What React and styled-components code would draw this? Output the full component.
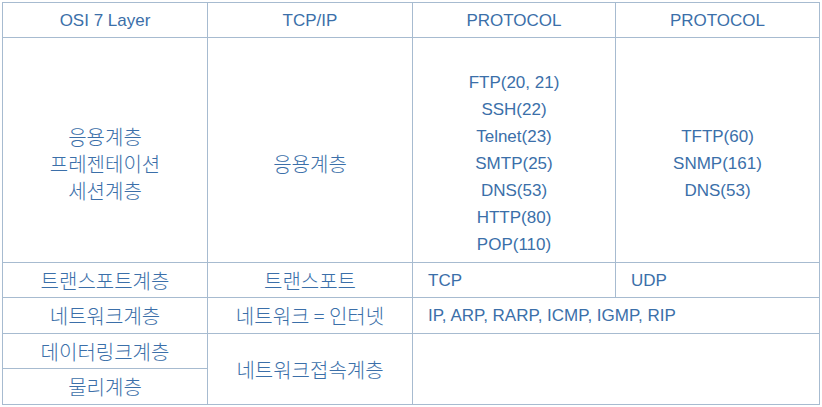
import React from "react";
import styled, { createGlobalStyle } from "styled-components";

const Global = createGlobalStyle`
  html, body { margin: 0; padding: 0; background: #ffffff; }
  body {
    font-family: "Liberation Sans", "Noto Sans CJK KR", Arial, sans-serif;
    color: #3b6fa9;
  }
`;

const Page = styled.div`
  padding: 2px;
`;

const Grid = styled.div`
  display: grid;
  grid-template-columns: 205px 205px 203px 204px;
  grid-template-rows: 35px 225px 35px 36px 35px 36px;
  width: 818px;
  border-left: 1px solid #a7bbd0;
  border-top: 1px solid #a7bbd0;
  box-sizing: border-box;
`;

const Cell = styled.div`
  grid-column: ${(p) => p.$col} / span ${(p) => p.$colSpan || 1};
  grid-row: ${(p) => p.$row} / span ${(p) => p.$rowSpan || 1};
  border-right: 1px solid #a7bbd0;
  border-bottom: 1px solid #a7bbd0;
  box-sizing: border-box;
  display: flex;
  flex-direction: column;
  justify-content: center;
  align-items: ${(p) => (p.$left ? "flex-start" : "center")};
  padding-left: ${(p) => (p.$left ? "15px" : "0")};
  padding-top: ${(p) => (p.$lead ? "27px" : "0")};
  font-size: 17px;
  line-height: 27px;
  text-align: ${(p) => (p.$left ? "left" : "center")};
  white-space: nowrap;
`;

const Line = styled.span`
  display: block;
`;

const Ko = styled.span`
  display: block;
  font-family: "Noto Sans CJK KR", sans-serif;
  font-size: 20px;
  font-weight: 300;
  line-height: 27px;
`;

const Lines = ({ items }) => items.map((t) => <Line key={t}>{t}</Line>);
const KoLines = ({ items }) => items.map((t) => <Ko key={t}>{t}</Ko>);

export default function App() {
  return (
    <>
      <Global />
      <Page>
        <Grid>
          <Cell $col={1} $row={1}>OSI 7 Layer</Cell>
          <Cell $col={2} $row={1}>TCP/IP</Cell>
          <Cell $col={3} $row={1}>PROTOCOL</Cell>
          <Cell $col={4} $row={1}>PROTOCOL</Cell>

          <Cell $col={1} $row={2} $lead>
            <KoLines items={["응용계층", "프레젠테이션", "세션계층"]} />
          </Cell>
          <Cell $col={2} $row={2} $lead>
            <Ko>응용계층</Ko>
          </Cell>
          <Cell $col={3} $row={2} $lead>
            <Lines
              items={[
                "FTP(20, 21)",
                "SSH(22)",
                "Telnet(23)",
                "SMTP(25)",
                "DNS(53)",
                "HTTP(80)",
                "POP(110)",
              ]}
            />
          </Cell>
          <Cell $col={4} $row={2} $lead>
            <Lines items={["TFTP(60)", "SNMP(161)", "DNS(53)"]} />
          </Cell>

          <Cell $col={1} $row={3}><Ko>트랜스포트계층</Ko></Cell>
          <Cell $col={2} $row={3}><Ko>트랜스포트</Ko></Cell>
          <Cell $col={3} $row={3} $left>TCP</Cell>
          <Cell $col={4} $row={3} $left>UDP</Cell>

          <Cell $col={1} $row={4}><Ko>네트워크계층</Ko></Cell>
          <Cell $col={2} $row={4}><Ko>네트워크 = 인터넷</Ko></Cell>
          <Cell $col={3} $row={4} $colSpan={2} $left>
            IP, ARP, RARP, ICMP, IGMP, RIP
          </Cell>

          <Cell $col={1} $row={5}><Ko>데이터링크계층</Ko></Cell>
          <Cell $col={2} $row={5} $rowSpan={2}><Ko>네트워크접속계층</Ko></Cell>
          <Cell $col={3} $row={5} $colSpan={2} $rowSpan={2} />
          <Cell $col={1} $row={6}><Ko>물리계층</Ko></Cell>
        </Grid>
      </Page>
    </>
  );
}
